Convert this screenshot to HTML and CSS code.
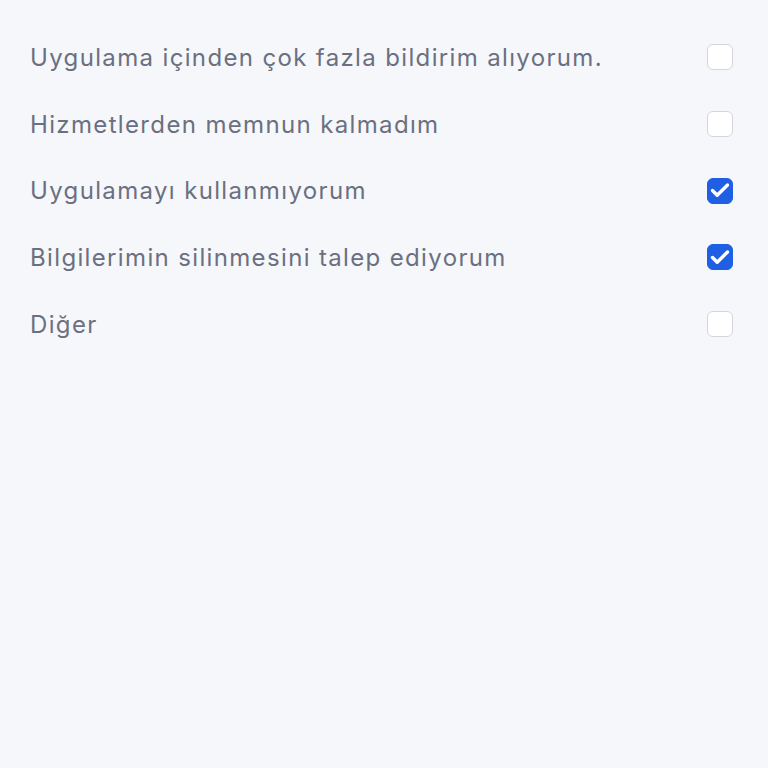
FILE: index.html
```html
<!DOCTYPE html>
<html lang="tr">
<head>
<meta charset="utf-8">
<link rel="stylesheet" href="styles.css">
</head>
<body>
<ul class="list">
  <li class="row"><span class="label">Uygulama içinden çok fazla bildirim alıyorum.</span><span class="box"></span></li>
  <li class="row"><span class="label">Hizmetlerden memnun kalmadım</span><span class="box"></span></li>
  <li class="row"><span class="label">Uygulamayı kullanmıyorum</span><span class="box checked"><svg viewBox="0 0 26 26" width="26" height="26"><path d="M5.5 13.5 L10.2 18.2 L20.5 8" fill="none" stroke="#fff" stroke-width="3.4" stroke-linecap="round" stroke-linejoin="round"/></svg></span></li>
  <li class="row"><span class="label">Bilgilerimin silinmesini talep ediyorum</span><span class="box checked"><svg viewBox="0 0 26 26" width="26" height="26"><path d="M5.5 13.5 L10.2 18.2 L20.5 8" fill="none" stroke="#fff" stroke-width="3.4" stroke-linecap="round" stroke-linejoin="round"/></svg></span></li>
  <li class="row"><span class="label">Diğer</span><span class="box"></span></li>
</ul>
</body>
</html>
```

FILE: styles.css
```css
html, body {
  margin: 0;
  padding: 0;
  background: #f6f7fa;
  height: 100%;
}
body {
  font-family: Inter, "Noto Sans", sans-serif;
}
.list {
  list-style: none;
  margin: 0;
  padding: 24px 35px 0 30px;
}
.row {
  height: 66.7px;
  display: flex;
  align-items: center;
  justify-content: space-between;
}
.label {
  font-size: 24px;
  letter-spacing: 1.35px;
  color: #6a7081;
}
.box {
  width: 26px;
  height: 26px;
  box-sizing: border-box;
  border: 1.5px solid #d3d5da;
  border-radius: 6px;
  background: #fff;
  display: flex;
}
.box.checked {
  background: #1f5fe3;
  border-color: #1f5fe3;
}
.box svg {
  margin: -1.5px;
}
```
